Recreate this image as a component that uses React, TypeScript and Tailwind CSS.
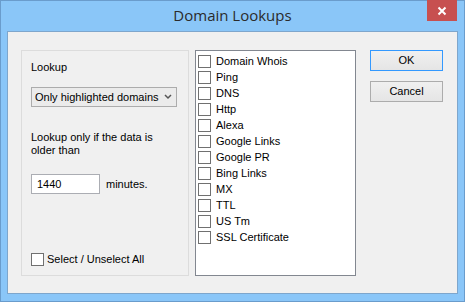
import React from "react";

const items = [
  "Domain Whois",
  "Ping",
  "DNS",
  "Http",
  "Alexa",
  "Google Links",
  "Google PR",
  "Bing Links",
  "MX",
  "TTL",
  "US Tm",
  "SSL Certificate",
];

function Box() {
  return <span className="block w-[13px] h-[13px] border border-[#707070] bg-white shrink-0" />;
}

export default function App(): JSX.Element {
  return (
    <div className="w-[465px] h-[302px] bg-[#8ac6f8] border border-[#6a9ccc] flex flex-col font-['Liberation_Sans',Arial,sans-serif] text-[11px] text-black">
      {/* title bar */}
      <div className="h-[30px] flex relative shrink-0">
        <div className="flex-1 flex items-center justify-center pb-[2px] text-[15px] text-[#2b2b2b] font-['Open_Sans',sans-serif]">
          Domain Lookups
        </div>
        <div className="absolute right-[7px] top-[-1px] w-[30px] h-[21px] bg-[#c75050] flex items-center justify-center">
          <svg width="10" height="10" viewBox="0 0 10 10">
            <path d="M1.5 1.5 L8.5 8.5 M8.5 1.5 L1.5 8.5" stroke="white" strokeWidth="2" />
          </svg>
        </div>
      </div>

      {/* client */}
      <div className="flex-1 mx-[6px] mb-[7px] bg-[#f0f0f0] border border-[#7ea6cc] flex pl-[13px] pt-[18px]">
        <div className="w-[168px] h-[226px] border border-[#dcdcdc] flex flex-col pl-[9px]">
          <div className="mt-[10px] leading-[13px]">Lookup</div>
          <div className="mt-[13px] w-[146px] h-[20px] border border-[#acacac] bg-[#ebebeb] flex items-center pl-[3px]">
            <span className="flex-1">Only highlighted domains</span>
            <svg width="8" height="6" viewBox="0 0 8 6" className="mr-[4px]">
              <path d="M1 1 L4 4 L7 1" stroke="#555" strokeWidth="1.5" fill="none" />
            </svg>
          </div>
          <div className="mt-[24px] leading-[13px] w-[130px]">Lookup only if the data is older than</div>
          <div className="mt-[17px] flex items-center">
            <div className="w-[69px] h-[20px] border border-[#abadb3] bg-white flex items-center pl-[5px]">1440</div>
            <span className="ml-[6px]">minutes.</span>
          </div>
          <div className="mt-[57px] flex items-center">
            <Box />
            <span className="ml-[3px]">Select / Unselect All</span>
          </div>
        </div>

        <div className="ml-[6px] w-[161px] h-[226px] border border-[#828790] bg-white flex flex-col pt-[2px] pl-[2px]">
          {items.map((t) => (
            <div key={t} className="h-[16px] flex items-center">
              <Box />
              <span className="ml-[5px]">{t}</span>
            </div>
          ))}
        </div>

        <div className="ml-[14px] flex flex-col gap-[10px]">
          <div className="w-[73px] h-[21px] border border-[#3399ff] bg-gradient-to-b from-[#f0f0f0] to-[#e5e5e5] flex items-center justify-center">
            OK
          </div>
          <div className="w-[73px] h-[21px] border border-[#acacac] bg-gradient-to-b from-[#f0f0f0] to-[#e5e5e5] flex items-center justify-center">
            Cancel
          </div>
        </div>
      </div>
    </div>
  );
}
